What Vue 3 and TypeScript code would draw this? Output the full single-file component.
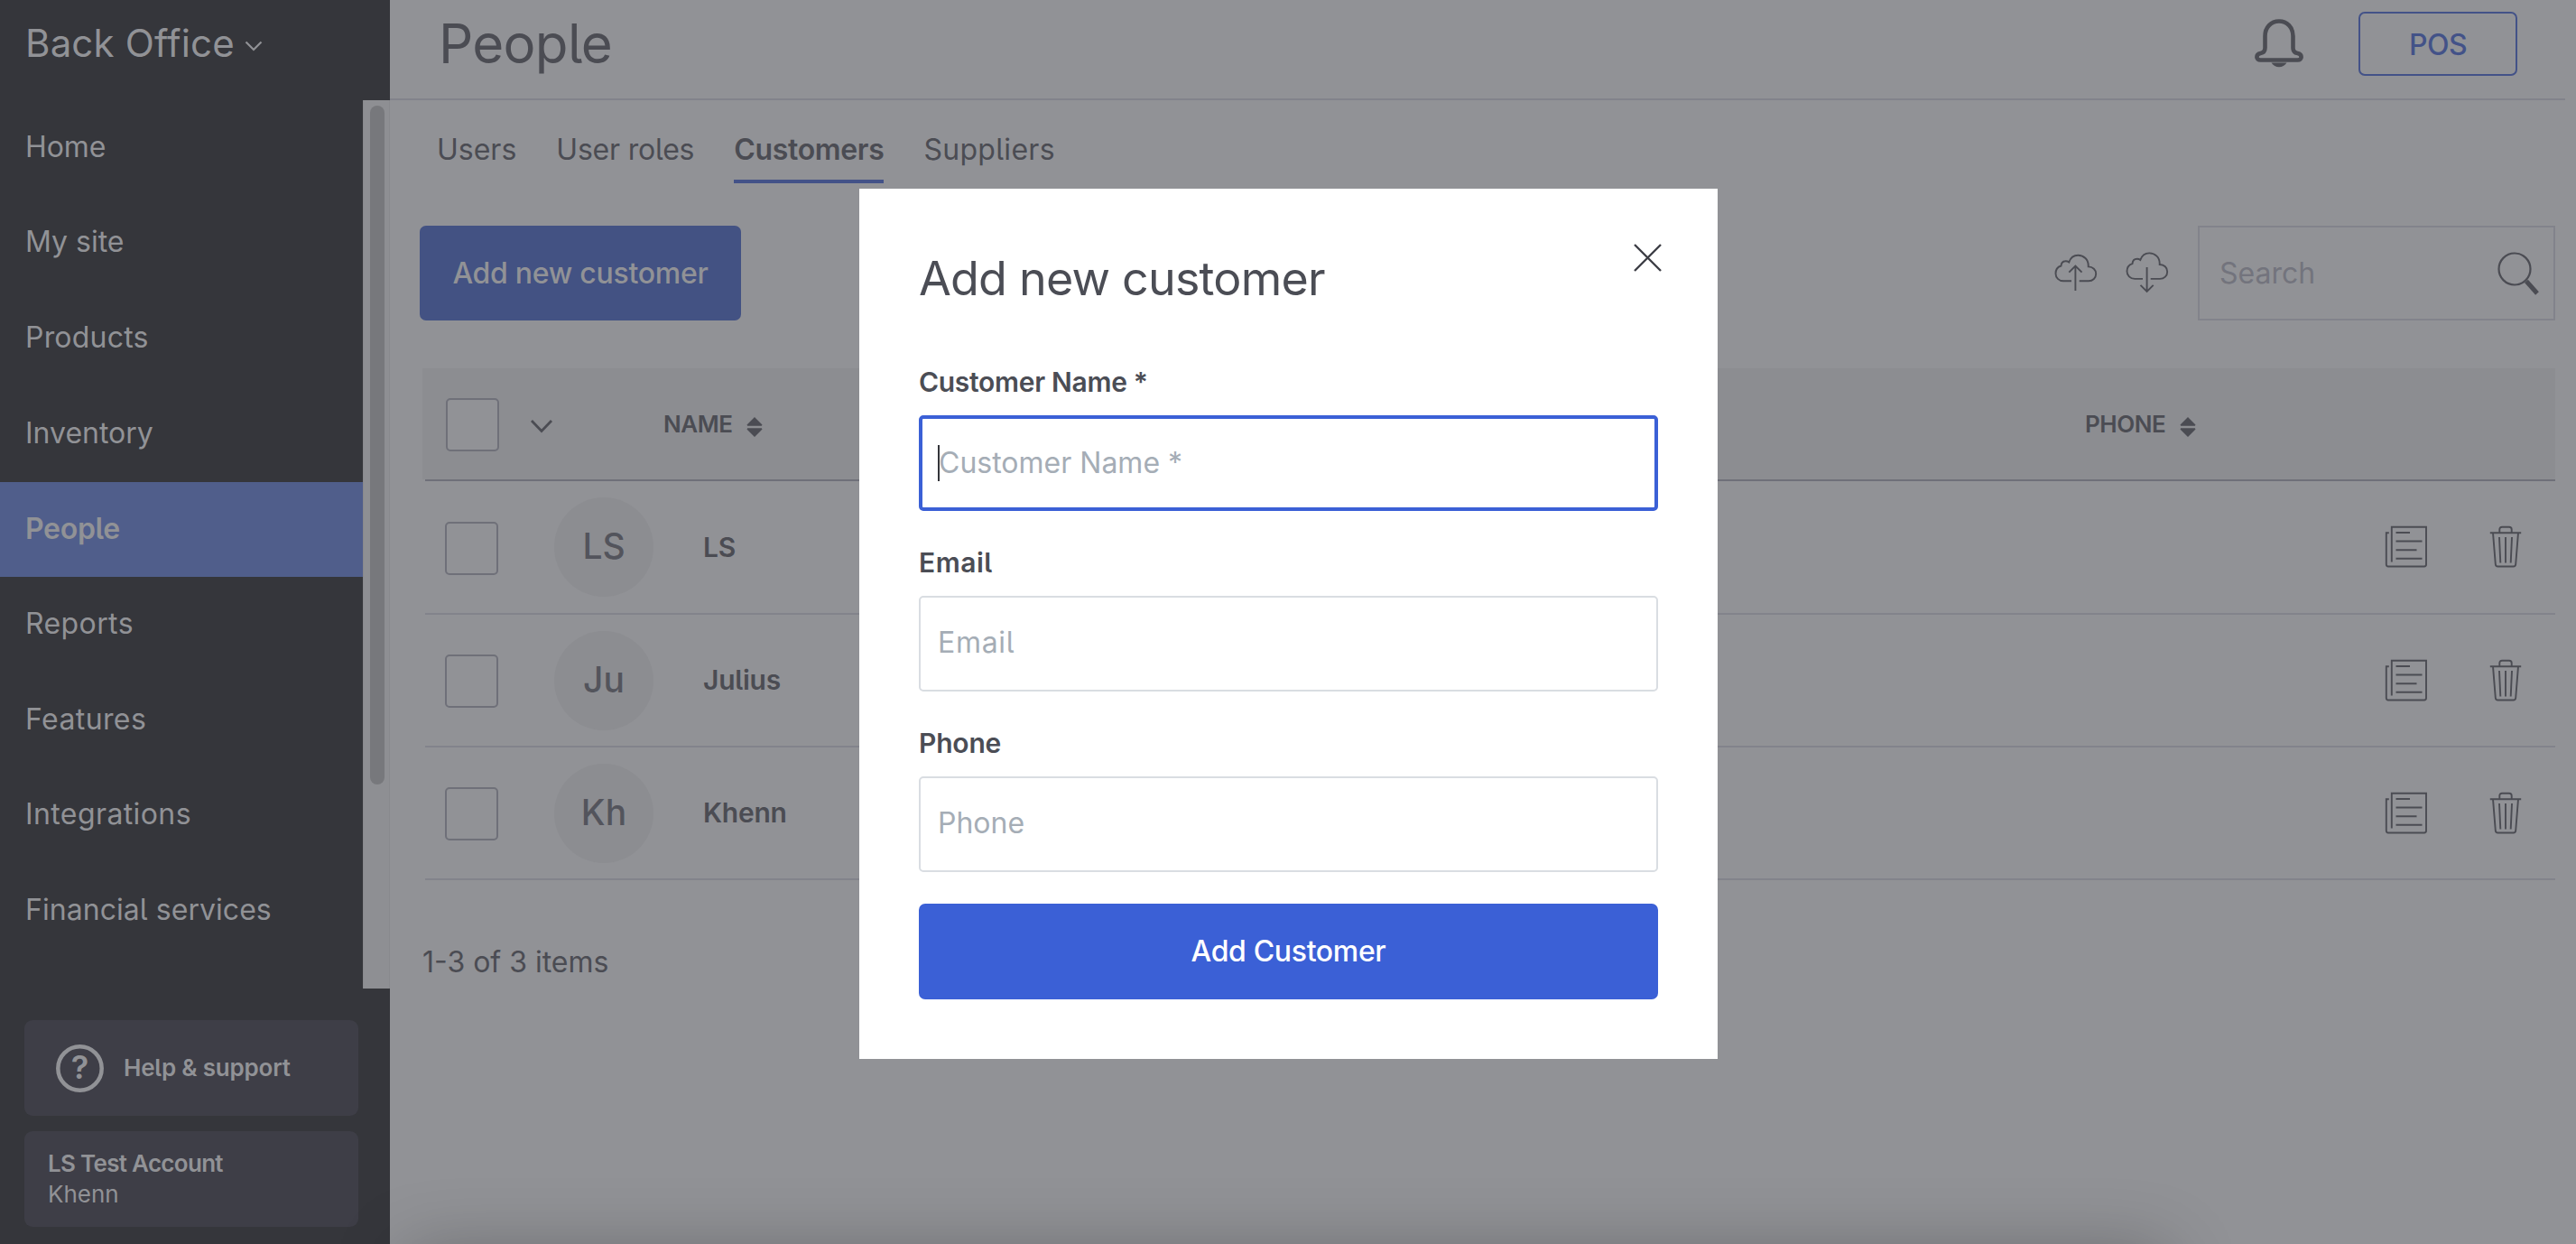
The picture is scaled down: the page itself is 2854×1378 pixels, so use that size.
<script setup lang="ts">
interface NavItem { label: string; active?: boolean; spacing: number }
interface Tab { label: string; active?: boolean; spacing: number }
interface Customer { initials: string; name: string }
interface Field { label: string; focused?: boolean; labelSpacing: number; hintSpacing: number }

const nav: NavItem[] = [
  { label: 'Home', spacing: -0.1 },
  { label: 'My site', spacing: 0 },
  { label: 'Products', spacing: 0.2 },
  { label: 'Inventory', spacing: 0 },
  { label: 'People', active: true, spacing: -0.3 },
  { label: 'Reports', spacing: 0.4 },
  { label: 'Features', spacing: 0.4 },
  { label: 'Integrations', spacing: 0.4 },
  { label: 'Financial services', spacing: 0.05 },
]

const tabs: Tab[] = [
  { label: 'Users', spacing: 0 },
  { label: 'User roles', spacing: -0.2 },
  { label: 'Customers', active: true, spacing: -0.35 },
  { label: 'Suppliers', spacing: 0.3 },
]

const customers: Customer[] = [
  { initials: 'LS', name: 'LS' },
  { initials: 'Ju', name: 'Julius' },
  { initials: 'Kh', name: 'Khenn' },
]

const fields: Field[] = [
  { label: 'Customer Name *', focused: true, labelSpacing: -0.3, hintSpacing: 0 },
  { label: 'Email', labelSpacing: 0.5, hintSpacing: 0.7 },
  { label: 'Phone', labelSpacing: -0.2, hintSpacing: 0 },
]
</script>

<template>
  <div class="page">
    <aside class="sidebar">
      <div class="brand">
        <span class="brand-text">Back Office</span>
        <svg class="brand-caret" width="20" height="12" viewBox="0 0 20 12"><path d="M1.5 1.5 10 10l8.500-8.500" /></svg>
      </div>
      <div class="nav-scroll">
        <nav class="nav">
          <a v-for="n in nav" :key="n.label" class="nav-item" :class="{ active: n.active }" :style="{ letterSpacing: n.spacing + 'px' }">{{ n.label }}</a>
        </nav>
        <div class="track"><div class="thumb"></div></div>
      </div>
      <div class="card help">
        <svg width="53" height="53" viewBox="0 0 53 53">
          <circle cx="26.500" cy="26.500" r="24.200" />
        </svg>
        <span class="qmark">?</span>
        <span class="help-text">Help &amp; support</span>
      </div>
      <div class="card account">
        <strong>LS Test Account</strong>
        <span>Khenn</span>
      </div>
    </aside>

    <main class="main">
      <header class="header">
        <h1>People</h1>
        <svg class="bell" width="54" height="54" viewBox="0 0 54 54">
          <path class="bell-body" d="M27 2.500c-9 0-15.500 7-15.500 16.500V32c0 4-2 5.500-5 6-5.500 1-5.500 7.500 0 7.500h41c5.500 0 5.500-6.500 0-7.500-3-.5-5-2-5-6V19C42.500 9.500 36 2.500 27 2.500z" />
          <path class="bell-clap" d="M18.500 48.500h17c-2 3-5 4.700-8.500 4.700s-6.500-1.700-8.500-4.700z" />
        </svg>
        <button class="pos">POS</button>
      </header>

      <nav class="tabs">
        <a v-for="t in tabs" :key="t.label" class="tab" :class="{ active: t.active }" :style="{ letterSpacing: t.spacing + 'px' }">{{ t.label }}</a>
      </nav>

      <div class="toolbar">
        <button class="add">Add new customer</button>
        <div class="tools">
          <svg class="line-icon up" width="48" height="48" viewBox="0 0 48 48">
            <path d="M19 35.300H10.200C5 35.300 1.500 31.500 1.500 27c0-4.200 2.300-7.400 6-8.500.3-3.300 2.600-5.300 5.200-5.300 1.400 0 2.600.4 3.600 1.200C18 9.500 21.500 6.800 26.300 6.800c6.500 0 11.400 4.800 11.400 11.400v1.200c5 .1 8.500 3.400 8.500 7.900 0 4.600-3.500 8-8.200 8H27.700" />
            <path d="M23.400 46V18.500M16.300 25.700l7.100-7.200 7.100 7.200" />
          </svg>
          <svg class="line-icon down" width="48" height="48" viewBox="0 0 48 48">
            <path transform="translate(0 -2.400)" d="M19 35.300H10.200C5 35.300 1.500 31.500 1.500 27c0-4.200 2.300-7.400 6-8.500.3-3.300 2.600-5.300 5.200-5.300 1.400 0 2.600.4 3.600 1.200C18 9.500 21.500 6.800 26.300 6.800c6.500 0 11.400 4.800 11.400 11.400v1.200c5 .1 8.500 3.400 8.500 7.900 0 4.600-3.500 8-8.200 8H27.700" />
            <path d="M23.600 20v27M16.500 39.800l7.100 7.200 7.100-7.200" />
          </svg>
          <div class="search">
            <span>Search</span>
            <svg width="48" height="48" viewBox="0 0 48 48">
              <circle cx="19" cy="19" r="17.500" />
              <path d="M32 32.500 44 46" />
            </svg>
          </div>
        </div>
      </div>

      <section class="table">
        <div class="thead">
          <span class="check"></span>
          <svg class="chev" width="26" height="16" viewBox="0 0 26 16"><path d="M2 2l11 11.500L24 2" /></svg>
          <div class="th th-name">
            <span>NAME</span>
            <svg width="18" height="22" viewBox="0 0 18 22"><path d="M9 0l8.500 8.500-.7 1.300H1.200L.5 8.500zM1.200 12.200h15.600l.7 1.300L9 22 .5 13.500z" /></svg>
          </div>
          <div class="th th-phone">
            <span>PHONE</span>
            <svg width="18" height="22" viewBox="0 0 18 22"><path d="M9 0l8.500 8.500-.7 1.300H1.200L.5 8.500zM1.200 12.200h15.600l.7 1.300L9 22 .5 13.500z" /></svg>
          </div>
        </div>
        <div class="tbody">
          <div v-for="c in customers" :key="c.name" class="row">
            <span class="check"></span>
            <span class="avatar">{{ c.initials }}</span>
            <span class="name">{{ c.name }}</span>
            <svg class="line-icon doc" width="48" height="48" viewBox="0 0 48 48">
              <path d="M7.800 40.500V1.800H46v41.500c0 1.500-.8 2.200-2.200 2.200H4c-1.500 0-2.200-.8-2.200-2.200V8.200h3" />
              <path d="M12.500 8h15.500M12.500 17.500h29M12.500 27.200h23M12.500 36.800h29" />
            </svg>
            <svg class="line-icon trash" width="36" height="48" viewBox="0 0 36 48">
              <path d="M.8 8.200h34.400M11.300 8.200V4.500c0-1.700 1-2.700 2.700-2.700h8c1.700 0 2.700 1 2.700 2.700v3.700M4 8.200l2.800 34.800c.1 1.700 1 2.500 2.700 2.500h17c1.700 0 2.600-.8 2.700-2.500L32 8.200" />
              <path d="M11 13l1.300 28.500M18 13v28.500M25 13l-1.300 28.500" />
            </svg>
          </div>
        </div>
      </section>
      <p class="count">1-3 of 3 items</p>
    </main>

    <div class="edge-shadow"><div class="edge-source"></div></div>

    <div class="modal">
      <div class="modal-head">
        <h2>Add new customer</h2>
        <svg width="31" height="31" viewBox="0 0 31 31"><path d="M1 1l29 29M30 1 1 30" /></svg>
      </div>
      <div v-for="f in fields" :key="f.label" class="field">
        <label :style="{ letterSpacing: f.labelSpacing + 'px' }">{{ f.label }}</label>
        <div class="input" :class="{ focused: f.focused }">
          <i v-if="f.focused" class="cursor"></i>
          <span :style="{ letterSpacing: f.hintSpacing + 'px' }">{{ f.label }}</span>
        </div>
      </div>
      <button class="submit">Add Customer</button>
    </div>
  </div>
</template>

<style>
body {
  margin: 0;
  overflow: hidden;
}
</style>

<style scoped>
.page {
  position: relative;
  display: flex;
  width: 2854px;
  height: 1378px;
  overflow: hidden;
  background: #919296;
  color: #4b4c53;
  font-family: Inter, "Liberation Sans", sans-serif;
  font-feature-settings: "cv05";
  font-size: 32px;
  line-height: 40px;
  white-space: nowrap;
}
.page * {
  box-sizing: border-box;
}
svg {
  display: block;
  flex: none;
  fill: none;
  overflow: visible;
}
button {
  border: 0;
  padding: 0;
  font: inherit;
  font-feature-settings: inherit;
}

/* Sidebar */
.sidebar {
  flex: none;
  width: 432px;
  display: flex;
  flex-direction: column;
  background: #35363b;
  color: #919296;
}
.brand {
  display: flex;
  align-items: center;
  height: 111px;
  padding: 0 0 16px 28px;
  font-size: 42px;
}
.brand-text {
  width: 243px;
  letter-spacing: .15px;
}
.brand-caret {
  margin-top: 6px;
  stroke: #919296;
  stroke-width: 2.200;
}
.nav-scroll {
  display: flex;
  height: 984px;
}
.nav {
  width: 402px;
}
.nav-item {
  display: flex;
  align-items: center;
  height: 105.660px;
  padding: 0 0 2px 28px;
}
.nav-item.active {
  padding-bottom: 0;
  background: #505e8b;
  font-weight: 600;
}
.track {
  width: 30px;
  padding: 6px 6px 0 8px;
  background: #8e8f93;
  border-left: 1px solid #88898d;
  border-right: 1px solid #88898d;
}
.thumb {
  width: 16px;
  height: 752px;
  margin-left: -1px;
  border-radius: 8px;
  background: #77787c;
}
.card {
  width: 370px;
  height: 106px;
  margin-left: 27px;
  border-radius: 9px;
  background: #3e3e47;
  font-size: 26px;
}
.help {
  display: flex;
  align-items: center;
  margin-top: 35px;
  padding-left: 35px;
  font-weight: 600;
}
.help svg {
  stroke: #919296;
  stroke-width: 4.500;
}
.qmark {
  width: 53px;
  margin-left: -53px;
  padding-bottom: 2px;
  text-align: center;
  font-size: 36px;
}
.help-text {
  margin-left: 22px;
  letter-spacing: -.2px;
}
.account {
  display: flex;
  flex-direction: column;
  justify-content: center;
  margin-top: 17px;
  padding: 0 0 1px 26px;
  line-height: 34px;
}
.account strong {
  font-weight: 600;
  letter-spacing: -.7px;
}

/* Main */
.main {
  flex: 1;
}
.header {
  display: flex;
  align-items: center;
  width: 2410px;
  height: 111px;
  padding: 0 53px 13px 54px;
  border-bottom: 2px solid #82838b;
}
h1 {
  flex: 1;
  margin: 0;
  font-size: 60px;
  font-weight: 400;
  letter-spacing: -.7px;
  line-height: 72px;
}
.bell {
  margin-right: 61px;
}
.bell-body {
  stroke: #4b4c53;
  stroke-width: 4.600;
}
.bell-clap {
  fill: #4b4c53;
}
.pos {
  width: 176px;
  height: 71px;
  border: 2px solid #435288;
  border-radius: 7px;
  background: transparent;
  color: #435288;
  font-weight: 500;
  letter-spacing: -.6px;
  line-height: 69px;
}
.tabs {
  display: flex;
  gap: 44px;
  height: 92px;
  padding: 34px 0 0 52px;
}
.tab {
  height: 58px;
  line-height: 41px;
}
.tab.active {
  border-bottom: 4px solid #435288;
  font-weight: 600;
}
.toolbar {
  display: flex;
  justify-content: space-between;
  height: 105px;
  margin: 47px 23px 0 33px;
}
.add {
  width: 356px;
  height: 105px;
  border-radius: 7px;
  background: #435283;
  color: #919296;
  font-weight: 500;
  letter-spacing: -.28px;
}
.tools {
  display: flex;
  align-items: center;
}
.line-icon {
  stroke: #4b4c53;
  stroke-width: 1.900;
}
.up {
  margin: -5px 31px 0 0;
}
.down {
  margin: -5px 32px 0 0;
}
.search {
  display: flex;
  align-items: center;
  justify-content: space-between;
  width: 396px;
  height: 105px;
  padding: 0 14px 0 22px;
  border: 2px solid #82838b;
  color: #73747d;
}
.search svg {
  stroke: #4b4c53;
  stroke-width: 2.200;
}
.search path {
  stroke-width: 5;
}

/* Table */
.table {
  margin: 53px 23px 0 36px;
}
.thead {
  display: flex;
  align-items: center;
  height: 123px;
  padding-left: 26px;
  background: #8c8d91;
}
.check {
  flex: none;
  width: 59px;
  height: 59px;
  margin-top: 2px;
  border: 2px solid #6f7079;
  border-radius: 5px;
  background: #919296;
}
.chev {
  margin: 4px 0 0 34px;
  stroke: #4b4c53;
  stroke-width: 2.800;
}
.th {
  display: flex;
  align-items: center;
  width: 110px;
  font-size: 26px;
  font-weight: 600;
  letter-spacing: -.5px;
}
.th span {
  flex: 1;
}
.th svg {
  margin-top: 7px;
  fill: #4b4c53;
}
.th-name {
  margin-left: 122px;
}
.th-phone {
  width: 123px;
  margin-left: 1465px;
}
.tbody {
  margin-left: 3px;
  border-top: 2px solid #6f7079;
}
.row {
  display: flex;
  align-items: center;
  height: 147px;
  padding: 0 37px 0 22px;
  border-bottom: 2px solid #82838b;
}
.row:first-child {
  height: 148px;
}
.avatar {
  width: 110px;
  height: 110px;
  margin-left: 62px;
  border-radius: 50%;
  background: #8c8d91;
  color: #53545c;
  font-size: 39px;
  font-weight: 500;
  line-height: 108px;
  text-align: center;
}
.name {
  flex: 1;
  margin-left: 55px;
  padding-bottom: 1px;
  font-size: 30px;
  font-weight: 600;
  letter-spacing: -.25px;
}
.trash {
  margin-left: 68px;
}
.count {
  margin: 71px 0 0 36px;
}

/* Shadow that rises from below the window's bottom edge */
.edge-shadow {
  position: absolute;
  inset: auto 0 0 0;
  height: 140px;
  overflow: hidden;
  pointer-events: none;
}
.edge-source {
  width: 1950px;
  height: 200px;
  margin: 150px 0 0 450px;
  box-shadow: 0 0 80px rgba(0, 0, 0, .28);
}

/* Modal */
.modal {
  position: absolute;
  left: 952px;
  top: 209px;
  width: 951px;
  height: 964px;
  padding: 0 66px;
  background: #fff;
  color: #4b4d55;
}
.modal-head {
  display: flex;
  justify-content: space-between;
  height: 193px;
}
h2 {
  margin: 67px 0 0;
  font-size: 52px;
  font-weight: 400;
  letter-spacing: -.8px;
  line-height: 66px;
}
.modal-head svg {
  margin: 61px -4px 0 0;
  stroke: #3c3d44;
  stroke-width: 2.400;
}
.field {
  height: 200px;
}
label {
  display: block;
  padding-bottom: 16px;
  font-size: 30px;
  font-weight: 600;
  line-height: 42px;
}
.input {
  display: flex;
  align-items: center;
  height: 106px;
  padding: 0 0 2px 19px;
  border: 2px solid #d9dde2;
  border-radius: 5px;
  color: #a5adb6;
}
.input.focused {
  padding: 0 0 1px 17px;
  border: 4px solid #3b60d6;
}
.cursor {
  width: 2px;
  height: 40px;
  margin: 1px -1px 0 0;
  background: #33343a;
}
.submit {
  display: block;
  width: 100%;
  height: 106px;
  margin-top: -1px;
  border-radius: 7px;
  background: #3b60d6;
  color: #fff;
  font-weight: 500;
  letter-spacing: -.35px;
}
</style>
